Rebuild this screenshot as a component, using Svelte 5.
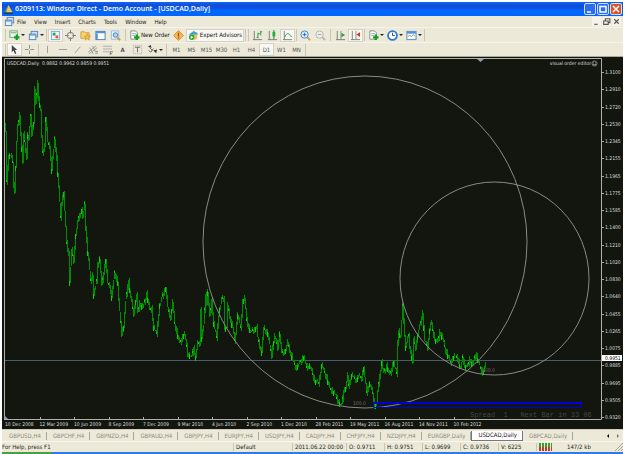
<script lang="ts">
  const menus = ['File', 'View', 'Insert', 'Charts', 'Tools', 'Window', 'Help'];

  const frames = ['M1', 'M5', 'M15', 'M30', 'H1', 'H4', 'D1', 'W1', 'MN'];
  let frame = $state('D1');

  const tabs = [
    'GBPUSD,H4', 'GBPCHF,H4', 'GBPNZD,H4', 'GBPAUD,H4', 'GBPJPY,H4', 'EURJPY,H4', 'USDJPY,H4',
    'CADJPY,H4', 'CHFJPY,H4', 'NZDJPY,H4', 'EURGBP,Daily', 'USDCAD,Daily', 'GBPCAD,Daily',
  ];
  let tab = $state('USDCAD,Daily');

  const prices = [
    '1.3100', '1.2910', '1.2720', '1.2530', '1.2345', '1.2155', '1.1965', '1.1775', '1.1585',
    '1.1400', '1.1210', '1.1020', '1.0830', '1.0640', '1.0455', '1.0265', '1.0075', '0.9885',
    '0.9695', '0.9505', '0.9320',
  ];
  const dates = [
    '10 Dec 2008', '12 Mar 2009', '10 Jun 2009', '8 Sep 2009', '7 Dec 2009', '9 Mar 2010',
    '4 Jun 2010', '2 Sep 2010', '1 Dec 2010', '28 Feb 2011', '19 May 2011', '16 Aug 2011',
    '14 Nov 2011', '10 Feb 2012',
  ];
  const ticks = dates.map((_, i) => `M${Math.round(5 + i * 34.5) + 0.5} 417v3`).join('');

  // swing points of the series, x,y in plot units
  const swings = `5,122 6,132 7,181 9,155 11,154 13,162 14,184 15,191 17,142 18,127 20,114 21,133 23,163
    24,133 27,157 28,135 29,140 31,115 32,133 34,123 35,88 36,105 38,83 39,98 41,110 42,138 43,152 45,145
    46,118 48,142 50,145 52,170 55,138 57,158 59,187 61,217 62,203 64,193 66,227 67,243 69,253 70,282
    72,250 74,260 76,235 79,217 82,210 83,218 85,203 86,227 88,252 89,260 91,280 93,275 94,295 97,280
    98,265 100,258 102,286 104,272 106,260 108,283 110,284 112,297 115,272 118,282 119,300 122,333
    124,327 126,300 129,280 131,297 134,313 137,295 138,313 140,302 143,308 147,293 150,310 152,308
    154,327 157,333 160,305 163,295 166,288 168,307 171,318 173,302 175,323 180,343 185,333 188,353
    192,357 194,347 196,357 198,343 200,343 201,308 202,338 204,325 206,293 207,303 208,292 210,317
    212,300 214,323 217,337 219,315 222,298 224,298 225,327 227,328 228,305 231,320 233,327 235,340
    238,315 241,327 243,302 245,297 247,320 251,332 257,327 258,337 262,352 264,327 268,333 272,355
    275,335 278,347 280,333 282,353 286,350 288,342 293,360 297,368 300,362 304,357 307,367 310,365
    315,380 319,383 322,365 327,377 330,388 335,393 338,400 342,405 344,390 346,388 348,375 349,385
    352,375 357,380 359,375 362,378 364,368 367,392 370,383 373,393 375,406 377,403 379,383 382,362
    384,373 387,365 390,375 394,362 397,373 398,343 399,330 401,337 403,305 404,320 406,347 409,335
    410,345 413,363 414,338 416,347 419,330 423,313 425,340 428,347 431,321 435,338 438,343 440,331
    443,338 446,350 451,362 455,355 458,358 461,368 463,357 465,365 468,367 470,358 473,365 476,353
    479,362 483,373 485,368 486,361`
    .trim().split(/\s+/).map((p) => p.split(',').map(Number));

  // one high-low bar per pixel column between the swings
  function buildBars(lit: boolean) {
    let d = '';
    for (let i = 1; i < swings.length; i++) {
      const [x0, y0] = swings[i - 1];
      const [x1, y1] = swings[i];
      for (let x = x0; x < x1; x++) {
        const a = y0 + ((y1 - y0) * (x - x0)) / (x1 - x0);
        const b = y0 + ((y1 - y0) * (x + 1 - x0)) / (x1 - x0);
        const up = (x * 7) % 5;
        const down = (x * 11) % 6;
        if (!lit) d += `M${x + 0.5} ${Math.round(Math.min(a, b)) - up + 1}V${Math.round(Math.max(a, b)) + down - 1}`;
        else if (x % 3 === 0) d += `M${x + 0.5} ${Math.round(b) - 1}v${2 + down}`;
      }
    }
    return d;
  }
  const bars = buildBars(false);
  const closes = buildBars(true);

  const axes = '<path d="M2.5 1v9.500M1 10.500h10" stroke="#777" fill="none"/>';
  const plus = '<path d="M8.500 5v6M5.500 8h6" stroke="#12a020" stroke-width="2.500"/>';
  const lens = '<path d="M7.500 7.500l3.500 3.500" stroke="#d9a13a" stroke-width="2"/>';
  const icons: Record<string, string> = {
    newChart: `<rect x="1" y="1" width="8" height="7" fill="#f4fbf4" stroke="#68a678"/><path d="M2 3h6" stroke="#55a968"/>${plus}`,
    profiles: '<rect x="3.500" y="1.500" width="7" height="6" fill="#cfe2f8" stroke="#5784bb"/><rect x="1.500" y="4.500" width="7" height="6" fill="#e8f2ff" stroke="#5784bb"/><path d="M2 5.500h6" stroke="#4b84d0"/>',
    market: '<rect x="1.500" y="1.500" width="9" height="9" fill="#e9f5ff" stroke="#7aa8ce"/><path d="M3 3h3v3H3z" fill="#2aa545"/><path d="M6 6h3v3H6z" fill="#e0592a"/>',
    target: '<circle cx="6" cy="6" r="3.500" fill="none" stroke="#777"/><path d="M6 0v4M6 8v4M0 6h4M8 6h4" stroke="#777"/>',
    folder: '<path d="M1 2h4l1 1h4v6H1z" fill="#f6d678" stroke="#cf9c35"/><path d="M8 4l1 2.500 2.500.2-2 1.600.7 2.700L8 9.500 5.800 11l.7-2.700-2-1.600L7 6.500z" fill="#ffc233" stroke="#c68625" stroke-width=".6"/>',
    terminal: '<rect x="1" y="1.500" width="10" height="9" fill="#fff" stroke="#4478ba"/><path d="M1 2.500h10M2 4v6" stroke="#4d91df" stroke-width="2"/>',
    tester: '<rect x="1.500" y="1" width="8" height="9" fill="#e9f1fa" stroke="#9db9d6"/><circle cx="6" cy="5.500" r="2.500" fill="#a9d3f6" stroke="#4c85bb"/><path d="M8 8l3 3" stroke="#c89a46" stroke-width="2"/>',
    order: `<path d="M2 1h5l2 2v7H2z" fill="#fff" stroke="#888"/><path d="M3.500 4h4M3.500 6h3" stroke="#8aa"/>${plus}`,
    diamond: '<path d="M6 .7L11.300 6 6 11.300.7 6z" fill="#f7bd4e" stroke="#d18825"/><path d="M6 3v4M6 8v1.200" stroke="#9a4c10" stroke-width="1.500"/>',
    expert: '<path d="M2 4l4-3 4 2 1 2-5 1-5-1z" fill="#42a0d4"/><path d="M3 5h7v4l-3 2-3-1z" fill="#f3bf4c"/><circle cx="4" cy="8" r="3" fill="#1dac3f"/><path d="M3 6.300v3.400L6 8z" fill="#fff"/>',
    bars: `${axes}<path d="M6.500 3v6M6.500 4h2M5 8h1.500M9.500 1v5M9.500 2H11" stroke="#279440" fill="none"/>`,
    candles: `${axes}<path d="M7.500 0v10" stroke="#187b2c"/><path d="M6 2h3v5H6z" fill="#22ab3d"/>`,
    line: `${axes}<path d="M3 8c2-5 4-5 5-3s2 2 3 2" stroke="#25963c" fill="none"/>`,
    zoomIn: `${lens}<circle cx="5" cy="5" r="4" fill="#d9ecff" stroke="#3e82cf"/><path d="M3 5h4M5 3v4" stroke="#2667bd"/>`,
    zoomOut: '<path d="M7.500 7.500l3.500 3.500" stroke="#bbb7a8" stroke-width="2"/><circle cx="5" cy="5" r="4" fill="#efeee7" stroke="#b5b3a8"/><path d="M3 5h4" stroke="#999"/>',
    scroll: `${axes}<path d="M6.500 1v9" stroke="#888"/><path d="M7 3l4 2.500L7 8z" fill="#2a9f3c"/>`,
    shift: `${axes}<path d="M6.500 1v9" stroke="#888"/><path d="M11 2.500L7 5l4 2.500z" fill="#cc3426"/>`,
    clock: '<circle cx="6" cy="6" r="4.800" fill="#fff" stroke="#2c79cf" stroke-width="2"/><path d="M6 3v3h2.500" stroke="#345" fill="none"/>',
    template: '<rect x="1" y="1.500" width="10" height="9" fill="#fff" stroke="#4f87c7"/><path d="M1 3h10" stroke="#4e91df" stroke-width="2"/><path d="M2 7l2-1 2 1 2-2 2 2" stroke="#6b9b72" fill="none"/>',
    cursor: '<path d="M3 1v8l2-2 1.500 4 1.500-.7L6.500 6.500H9z" fill="#444"/>',
    cross: '<path d="M6 1v4M6 7v4M1 6h4M7 6h4" stroke="#888"/>',
    vline: '<path d="M6 2v8" stroke="#999"/>',
    hline: '<path d="M2 6h9" stroke="#999"/>',
    trend: '<path d="M3 10l6-7" stroke="#999"/>',
    channel: '<path d="M1 9l9-7M2 11l9-7M3 4l4 7M6 2l3 6" stroke="#888" fill="none" stroke-width=".8"/><path d="M9 8h3M9 10h3" stroke="#888"/>',
    fibo: '<path d="M1 2.500h10M1 5.500h10M1 8.500h7" stroke="#aaa"/><path d="M9 8v4M9 8.500h3M9 10.500h2" stroke="#777"/>',
    textBox: '<rect x="1.500" y="1.500" width="9" height="9" fill="none" stroke="#aaa" stroke-dasharray="1 1"/><path d="M3 3.500h6M6 3.500V9" stroke="#666"/>',
    arrows: '<path d="M1 3l3-2 1 3zM7 7l4-1-1 4z" fill="#333"/><path d="M3 4l3 3M2 7l2 2 3-4" stroke="#555" fill="none"/>',
  };
</script>

{#snippet icon(name: string)}
  <svg class="icon" viewBox="0 0 12 12" aria-hidden="true">{@html icons[name]}</svg>
{/snippet}

{#snippet tool(name: string, label: string, on = false)}
  <button class="tool" class:on aria-label={label}>{@render icon(name)}</button>
{/snippet}

{#snippet drop(name: string, label: string)}
  <button class="tool drop" aria-label={label}>{@render icon(name)}<span class="caret"></span></button>
{/snippet}

<div class="window">
  <header class="title">
    <svg class="icon" viewBox="0 0 12 12" aria-hidden="true">
      <path d="M6 1l5 9H1z" fill="#f0c75a" />
      <path d="M6 1L3 10H1z" fill="#2b8b72" />
      <path d="M1 10h10" stroke="#253f55" stroke-width="2" />
    </svg>
    <h1>6209113: Windsor Direct - Demo Account - [USDCAD,Daily]</h1>
    <button class="win" aria-label="Minimize"><svg viewBox="0 0 10 10"><path d="M2 8h4" /></svg></button>
    <button class="win" aria-label="Maximize"><svg viewBox="0 0 10 10"><path d="M2 2.500h6v5.500H2z" /></svg></button>
    <button class="win close" aria-label="Close"><svg viewBox="0 0 10 10"><path d="M2 2l6 6M8 2L2 8" /></svg></button>
  </header>

  <nav class="menu">
    {@render icon('profiles')}
    {#each menus as item}
      <button>{item}</button>
    {/each}
    <span class="grow"></span>
    <button class="mdi" aria-label="Minimize chart"><svg viewBox="0 0 8 8"><path d="M2 6.500h3" /></svg></button>
    <button class="mdi" aria-label="Restore chart"><svg viewBox="0 0 8 8"><path d="M3 3V1.500h4V5H5.500M1.500 3.500h4v3h-4z" /></svg></button>
    <button class="mdi" aria-label="Close chart"><svg viewBox="0 0 8 8"><path d="M2 2l4 4M6 2L2 6" /></svg></button>
  </nav>

  <div class="bar">
    <i class="sep"></i>
    {@render drop('newChart', 'New chart')}
    {@render drop('profiles', 'Profiles')}
    <i class="sep"></i>
    {@render tool('market', 'Market Watch', true)}
    {@render tool('target', 'Data Window')}
    {@render tool('folder', 'Navigator')}
    {@render tool('terminal', 'Terminal')}
    {@render tool('tester', 'Strategy Tester')}
    <i class="sep wide"></i>
    <button class="labelled">{@render icon('order')}New Order</button>
    {@render tool('diamond', 'MetaEditor')}
    <button class="labelled on">{@render icon('expert')}Expert Advisors</button>
    <i class="sep"></i>
    <i class="sep"></i>
    {@render tool('bars', 'Bar chart')}
    {@render tool('candles', 'Candlesticks')}
    {@render tool('line', 'Line chart', true)}
    <i class="sep"></i>
    {@render tool('zoomIn', 'Zoom in')}
    {@render tool('zoomOut', 'Zoom out')}
    <i class="sep wide"></i>
    {@render tool('scroll', 'Auto scroll')}
    {@render tool('shift', 'Chart shift', true)}
    <i class="sep"></i>
    {@render drop('order', 'Indicators')}
    {@render drop('clock', 'Periods')}
    {@render drop('template', 'Templates')}
    <i class="sep"></i>
  </div>

  <div class="bar">
    <i class="sep"></i>
    {@render tool('cursor', 'Cursor', true)}
    {@render tool('cross', 'Crosshair')}
    <i class="sep"></i>
    {@render tool('vline', 'Vertical line')}
    {@render tool('hline', 'Horizontal line')}
    {@render tool('trend', 'Trendline')}
    {@render tool('channel', 'Equidistant channel')}
    {@render tool('fibo', 'Fibonacci retracement')}
    <button class="tool letter">A</button>
    {@render tool('textBox', 'Text label')}
    {@render drop('arrows', 'Arrows')}
    <i class="sep wide"></i>
    {#each frames as f}
      <button class="tool" class:on={f === frame} onclick={() => (frame = f)}>{f}</button>
    {/each}
    <i class="sep"></i>
  </div>

  <main class="chart">
    <svg class="plot" viewBox="4 58 598 362" role="img" aria-label="USDCAD daily price chart">
      <path class="price" d="M4 360.500H601" />
      <path class="series" d={bars} />
      <path class="closes" d={closes} />
      <ellipse cx="365" cy="242" rx="162" ry="166" />
      <ellipse cx="494.500" cy="278.500" rx="94.500" ry="96.500" />
      <path class="zone" d="M373.500 402V407.500H581.500V402" />
      <path class="zone thick" d="M373 403H582" />
      <path class="frame" d="M4.500 419.500V58.500H601.500V419.500H4" />
      <path class="frame" d={ticks} />
      <polygon class="marker" points="477,59 484,59 480.500,62" />
      <polygon class="marker" points="4,415 4,419 8,419" />
      <text class="note" x="353" y="405">100.0</text>
      <text class="note" x="482" y="372">100.0</text>
      <text class="spread" x="470" y="417" xml:space="preserve">Spread  1   Next Bar in 33 06</text>
      <text x="7" y="65">USDCAD,Daily&nbsp; 0.9882 0.9962 0.9859 0.9951</text>
      <text x="591" y="65" text-anchor="end">visual order editor</text>
      <g class="face">
        <circle cx="594.500" cy="63.500" r="2.500" />
        <path d="M593.500 62.500v1M595.500 62.500v1M593 64.500h3" />
      </g>
    </svg>
    <div class="prices">
      {#each prices as p}
        <span>{p}</span>
      {/each}
      <b class="last">0.9951</b>
    </div>
    <div class="dates">
      {#each dates as d}
        <span>{d}</span>
      {/each}
    </div>
  </main>

  <div class="tabs">
    {#each tabs as t}
      <button class:current={t === tab} onclick={() => (tab = t)}>{t}</button>
    {/each}
    <span class="grow"></span>
    <button class="arrow" aria-label="Scroll tabs left"><svg viewBox="0 0 6 6"><path d="M4 1v4L2 3z" /></svg></button>
    <button class="arrow" aria-label="Scroll tabs right"><svg viewBox="0 0 6 6"><path d="M2 1v4l2-2z" opacity=".5" /></svg></button>
  </div>

  <footer class="status">
    <span class="grow">For Help, press F1</span>
    <span class="w-profile">Default</span>
    <span class="w-time">2011.06.22 00:00</span>
    <span>O: 0.9711</span>
    <span>H: 0.9751</span>
    <span>L: 0.9699</span>
    <span>C: 0.9736</span>
    <span>V: 6225</span>
    <span class="w-link">
      <svg class="signal" viewBox="0 0 13 8" aria-hidden="true">
        <path d="M0 2h13" stroke="#3c9d35" stroke-width="4" stroke-dasharray="2 1" />
        <path d="M0 6h13" stroke="#c33b2b" stroke-width="4" stroke-dasharray="2 1" />
      </svg>
      147/2 kb
    </span>
    <svg class="grip" viewBox="0 0 8 8" aria-hidden="true"><path d="M0 8l8-8M3 8l5-5M6 8l2-2" /></svg>
  </footer>
  <div class="taskbar"></div>
</div>

<style>
  :global(body) {
    background: #fff;
  }

  .window {
    padding: 2px 2px 0;
    font: 6px/8px 'DejaVu Sans Condensed', 'DejaVu Sans', sans-serif;
    color: #222;
    white-space: nowrap;
  }

  button {
    padding: 0;
    border: 0;
    background: none;
    color: inherit;
    font: inherit;
  }

  .icon {
    width: 11px;
    height: 11px;
    flex: none;
  }

  .grow { flex: 1; }

  /* Title bar */
  .title {
    display: flex;
    align-items: center;
    gap: 1px;
    height: 14px;
    padding: 0 1px;
    background: linear-gradient(#0868ff, #164cd2 25%, #0c55e6 45%, #0066ff 60%, #0066ff);
    color: #fff;
  }
  .title h1 {
    flex: 1;
    margin: 0;
    font: 600 7px/12px 'Open Sans', sans-serif;
  }
  .win {
    display: flex;
    width: 12px;
    height: 12px;
    box-sizing: border-box;
    border: 1px solid #cfdcff;
    border-radius: 2px;
    background: #2d6cec;
  }
  .win svg {
    width: 10px;
    height: 10px;
    fill: none;
    stroke: #fff;
    stroke-width: 1.5;
  }
  .close { background: #dc5527; }

  /* Menu */
  .menu {
    display: flex;
    align-items: center;
    height: 11px;
    padding: 0 2px;
    background: #ece9d8;
  }
  .menu button { margin-left: 8px; }
  .menu .icon + button { margin-left: 2px; }
  .menu .mdi {
    display: flex;
    width: 9px;
    height: 9px;
    margin-left: 1px;
    background: #f5f3ea;
  }
  .mdi svg {
    width: 9px;
    height: 9px;
    fill: none;
    stroke: #555;
  }

  /* Toolbars */
  .bar {
    display: flex;
    align-items: center;
    height: 15px;
    padding-left: 2px;
    box-sizing: border-box;
    background: #ece9d8;
    border-top: 1px solid #f6f4ea;
    color: #555;
  }
  .bar + .bar { height: 14px; }
  .sep {
    width: 1px;
    height: 12px;
    margin: 0 1px;
    background: #cbc7b4;
  }
  .wide { margin: 0 2px; }
  .tool {
    display: flex;
    align-items: center;
    justify-content: center;
    width: 15px;
    height: 13px;
  }
  .drop {
    width: 19px;
    gap: 1px;
  }
  .caret {
    border: 2px solid transparent;
    border-top-color: #222;
    border-bottom: 0;
  }
  .on {
    background: #f8f7f2;
    box-shadow: inset 0 0 0 1px #d5d2c4;
  }
  .letter { font-weight: bold; }
  .labelled {
    display: flex;
    align-items: center;
    height: 13px;
    padding: 0 1px;
    gap: 1px;
    color: #111;
  }
  .labelled.on { padding: 0 2px; }

  /* Chart */
  .chart {
    display: grid;
    grid-template-columns: 1fr 21px;
    padding: 1px 0 0 2px;
    border-top: 1px solid #aca899;
    background: #13160f;
    color: #ddd;
    font-size: 5px;
  }
  .plot {
    display: block;
    width: 100%;
  }
  .plot path { fill: none; }
  .plot ellipse {
    fill: none;
    stroke: #898989;
  }
  .plot text {
    fill: #ddd;
    font-size: 5px;
  }
  .plot .note { fill: #776c68; }
  .plot .spread {
    fill: #454545;
    font: 7px 'Liberation Mono', monospace;
    white-space: pre;
  }
  .price { stroke: #465c74; }
  .series { stroke: #008c00; }
  .closes { stroke: #00d800; }
  .zone { stroke: #0000d8; }
  .thick { stroke-width: 2; }
  .frame { stroke: #b0b0a8; }
  .marker { fill: #8ba0b8; }
  .face {
    fill: none;
    stroke: #ccc;
    stroke-width: 0.6;
  }
  .prices {
    position: relative;
    display: flex;
    flex-direction: column;
    justify-content: space-between;
    padding-top: 12px;
    line-height: 5px;
  }
  .prices span {
    display: flex;
    align-items: center;
    gap: 1px;
  }
  .prices span::before {
    width: 2px;
    height: 1px;
    background: #aaa;
    content: '';
  }
  .last {
    position: absolute;
    top: 82%;
    left: 0;
    right: 1px;
    padding: 1px 0 0 3px;
    background: #fff;
    color: #000;
    font-weight: normal;
  }
  .dates {
    display: grid;
    grid-template-columns: repeat(14, 1fr);
    grid-column: 1 / -1;
    padding: 0 135px 0 1px;
  }
  .dates span {
    height: 9px;
    line-height: 8px;
  }

  /* Chart tabs */
  .tabs {
    display: flex;
    align-items: center;
    height: 12px;
    padding-left: 1px;
    background: #ece9d8;
    color: #8d8a7e;
    border-top: 1px solid #d0cdbf;
    box-sizing: border-box;
  }
  .tabs button {
    padding: 0 5px 0 6px;
    border-right: 1px solid #aaa798;
  }
  .tabs .current {
    background: #fff;
    color: #111;
    height: 10px;
    border: 1px solid #777;
    border-top: 0;
  }
  .tabs .arrow {
    display: flex;
    padding: 0 2px;
    border: 0;
  }
  .arrow svg {
    width: 6px;
    height: 6px;
  }

  /* Status bar */
  .status {
    display: flex;
    align-items: center;
    height: 11px;
    background: #ece9d8;
    border-top: 1px solid #f8f6ee;
    box-sizing: border-box;
  }
  .status span {
    width: 35px;
    padding-left: 2px;
    border-left: 1px solid #c8c5b4;
  }
  .status .grow { border: 0; padding: 0; }
  .status .w-profile { width: 56px; }
  .status .w-time { width: 51px; }
  .status .w-link {
    display: flex;
    align-items: center;
    gap: 15px;
    width: 76px;
  }
  .signal {
    width: 13px;
    height: 8px;
  }
  .grip {
    width: 8px;
    height: 8px;
    fill: none;
    stroke: #aaa798;
  }
  .taskbar {
    height: 2px;
    background: linear-gradient(90deg, #4a9f45 8%, #2f7ce8 8%);
  }
</style>
